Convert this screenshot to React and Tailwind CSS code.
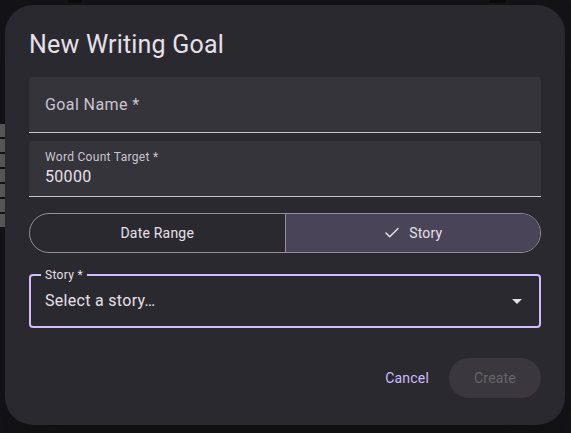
import React, { useState } from 'react';
import { Check } from 'lucide-react';

const font = { fontFamily: 'Roboto, "Noto Sans", sans-serif' };

const App = () => {
    const [mode, setMode] = useState('story');

    return (
        <div className="relative h-[433px] w-[571px] overflow-hidden bg-[#141317]" style={font}>
            {/* backdrop bits peeking out behind the dialog */}
            <div className="absolute left-0 top-[124px] flex w-[6px] flex-col gap-[2px]">
                {[0, 1, 2, 3, 4, 5, 6].map((i) => (
                    <div key={i} className="h-[13px] bg-[#5c5b5e]" />
                ))}
            </div>
            <div className="absolute left-[68px] top-0 h-[3px] w-[14px] bg-[#0b0a0c]" />
            <div className="absolute left-[490px] top-0 h-[3px] w-[16px] bg-[#0b0a0c]" />

            <div className="absolute left-[5px] top-[5px] flex h-[420px] w-[560px] flex-col rounded-[28px] bg-[#2b2930] p-6 shadow-2xl">
                <h2 className="text-[25px] leading-8 tracking-[0.2px] text-[#e6e0e9]">New Writing Goal</h2>

                {/* Goal name */}
                <div className="mt-4 flex h-14 items-center rounded-t border-b border-[#cac4d0] bg-[#36343b] px-4">
                    <span className="text-base tracking-[0.4px] text-[#cac4d0]">Goal Name *</span>
                </div>

                {/* Word count */}
                <div className="mt-2 flex h-14 flex-col justify-center rounded-t border-b border-[#cac4d0] bg-[#36343b] px-4">
                    <span className="text-xs leading-4 tracking-[0.3px] text-[#cac4d0]">Word Count Target *</span>
                    <span className="text-base leading-6 tracking-[0.3px] text-[#e6e0e9]">50000</span>
                </div>

                {/* Segmented */}
                <div className="mt-4 flex h-10 overflow-hidden rounded-full border border-[#938f99] text-sm tracking-[0.2px] text-[#e6e0e9]">
                    <button
                        onClick={() => setMode('date')}
                        className={`flex flex-1 items-center justify-center gap-2 ${mode === 'date' ? 'bg-[#4a4458]' : ''}`}
                    >
                        {mode === 'date' && <Check size={18} strokeWidth={2} />}
                        Date Range
                    </button>
                    <div className="w-px bg-[#938f99]" />
                    <button
                        onClick={() => setMode('story')}
                        className={`flex flex-1 items-center justify-center gap-2 ${mode === 'story' ? 'bg-[#4a4458]' : ''}`}
                    >
                        {mode === 'story' && <Check size={18} strokeWidth={2} />}
                        Story
                    </button>
                </div>

                {/* Story select */}
                <div className="relative mt-[21px] flex h-[54px] items-center rounded border-2 border-[#d0bcff] pl-[14px] pr-[10px]">
                    <span className="absolute -top-[9px] left-[10px] bg-[#2b2930] px-1 text-xs leading-4 tracking-[0.3px] text-[#e6e0e9]">Story *</span>
                    <span className="flex-1 text-base tracking-[0.3px] text-[#e6e0e9]">Select a story…</span>
                    <svg width="24" height="24" viewBox="0 0 24 24" className="fill-[#e6e0e9]">
                        <path d="M7 10l5 5 5-5z" />
                    </svg>
                </div>

                {/* Actions */}
                <div className="mt-[30px] flex items-center justify-end gap-2">
                    <button className="h-10 rounded-full px-3 text-sm tracking-[0.2px] text-[#d0bcff]">Cancel</button>
                    <button disabled className="h-10 w-[92px] rounded-full bg-[#3a383e] text-sm tracking-[0.2px] text-[#67646b]">Create</button>
                </div>
            </div>
        </div>
    );
};

export default App;
